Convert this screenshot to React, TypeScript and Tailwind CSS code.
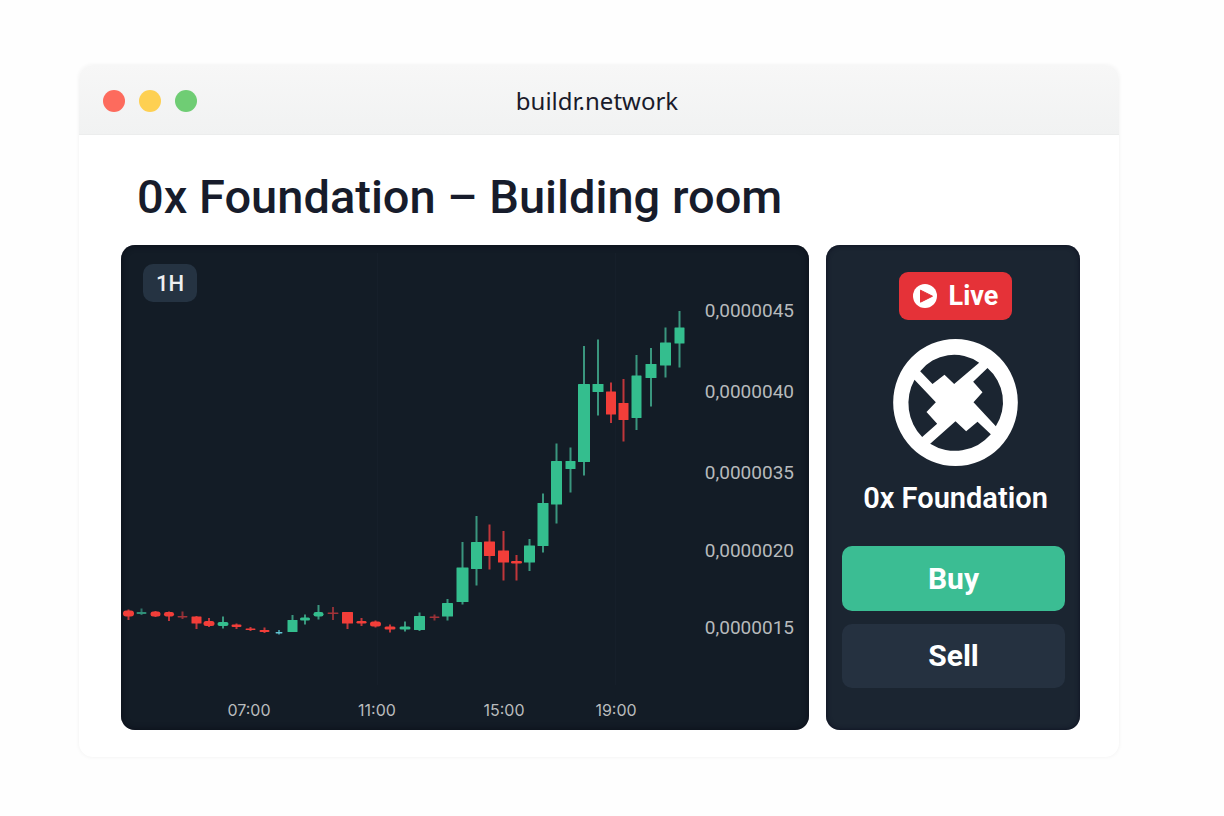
type Tone = 'up' | 'down' | 'upDim' | 'downDim' | 'flat';

interface Candle {
  x: number;
  high: number;
  low: number;
  top: number;
  bottom: number;
  width: number;
  tone: Tone;
}

const tones: Record<Tone, { body: string; wick: string }> = {
  up: { body: '#34be8e', wick: '#3a967e' },
  down: { body: '#f23e39', wick: '#bf363a' },
  upDim: { body: '#2f8f78', wick: '#2c6f66' },
  downDim: { body: '#a33238', wick: '#8d3036' },
  flat: { body: '#62c4d2', wick: '#3d8a96' },
};

const c = (
  x: number,
  high: number,
  low: number,
  top: number,
  bottom: number,
  width: number,
  tone: Tone,
): Candle => ({ x, high, low, top, bottom, width, tone });

const candles: Candle[] = [
  c(7.5, 364.5, 375, 365.5, 371.5, 11, 'down'),
  c(20.5, 363.5, 370, 367, 369, 10, 'upDim'),
  c(34.5, 366, 372, 366.5, 371.5, 10, 'down'),
  c(48, 366.5, 376, 367, 371.5, 10, 'down'),
  c(61.5, 366.5, 374, 371, 372.5, 10, 'downDim'),
  c(75.5, 371, 384, 371.5, 378.5, 10, 'down'),
  c(88, 373, 382, 376, 381, 11, 'down'),
  c(102, 371.5, 383.5, 377, 381, 11, 'up'),
  c(115.5, 378.5, 384, 379.5, 382, 10, 'down'),
  c(129.5, 382, 386, 383.5, 385, 10, 'down'),
  c(143.5, 382.5, 388, 385, 387, 10, 'down'),
  c(158, 385, 389.5, 387, 388.5, 7, 'flat'),
  c(171.5, 370, 387, 375, 387, 10, 'up'),
  c(184, 369.5, 379.5, 372.5, 375.5, 10, 'up'),
  c(197.5, 360, 374.5, 367, 371.5, 10, 'up'),
  c(212, 362, 375, 367.5, 369, 11, 'downDim'),
  c(226.5, 367, 384, 367, 378.5, 11, 'down'),
  c(240.5, 373, 381, 376, 378.5, 10, 'down'),
  c(254.5, 375.5, 382.5, 376.5, 381.5, 11, 'down'),
  c(269, 379.5, 387.5, 381.5, 384.5, 11, 'down'),
  c(284, 376.5, 386.5, 381.5, 384.5, 11, 'up'),
  c(298.5, 367.5, 386, 371, 385, 11, 'up'),
  c(313.5, 369.5, 375.5, 371.5, 373, 10, 'downDim'),
  c(326.5, 354, 375.5, 358, 371.5, 11, 'up'),
  c(341.5, 297, 359.5, 322.5, 357, 12, 'up'),
  c(355.5, 271, 340.5, 297, 324, 11, 'up'),
  c(368.5, 279.5, 324.5, 296.5, 311, 11, 'down'),
  c(382.5, 286, 335.5, 305.5, 317.5, 11, 'down'),
  c(395.5, 310, 335.5, 316, 318.5, 11, 'down'),
  c(408.5, 294, 326, 300.5, 317.5, 11, 'up'),
  c(422, 248.5, 307.5, 258, 301, 11, 'up'),
  c(435.5, 198.5, 278.5, 216, 259.5, 11, 'up'),
  c(449.5, 202.5, 247.5, 216, 224, 10, 'up'),
  c(463, 101, 230.5, 139, 217, 12, 'up'),
  c(477, 94.5, 170.5, 139, 147, 11, 'up'),
  c(490, 137.5, 178, 146.5, 169.5, 10, 'down'),
  c(502.5, 134, 196.5, 158, 175, 10, 'down'),
  c(515.5, 110, 185, 130.5, 173, 10, 'up'),
  c(530, 103, 161.5, 119, 133, 11, 'up'),
  c(544.5, 82.5, 132.5, 97.5, 120.5, 11, 'up'),
  c(558.5, 66, 122.5, 82.5, 98.5, 10, 'up'),
];

const prices = [
  { label: '0,0000045', y: 72 },
  { label: '0,0000040', y: 153 },
  { label: '0,0000035', y: 234 },
  { label: '0,0000020', y: 312 },
  { label: '0,0000015', y: 389 },
];

const times = [
  { label: '07:00', x: 128 },
  { label: '11:00', x: 256 },
  { label: '15:00', x: 383 },
  { label: '19:00', x: 495 },
];

function CandleMark({ candle }: { candle: Candle }) {
  const { x, high, low, top, bottom, width, tone } = candle;
  const colors = tones[tone];
  const height = bottom - top;
  return (
    <g>
      <rect x={x - 1} y={high} width={2} height={low - high} fill={colors.wick} />
      <rect
        x={x - width / 2}
        y={top}
        width={width}
        height={height}
        rx={height < 7 ? height / 2 : 0.5}
        fill={colors.body}
      />
    </g>
  );
}

function PriceChart() {
  return (
    <section
      aria-label="Price chart"
      className="relative min-w-0 flex-1 overflow-hidden rounded-[14px] bg-[#131c26] shadow-[inset_0_0_6px_#0a0d18]"
    >
      <svg viewBox="0 0 688 485" className="block h-auto w-full" role="img" aria-label="Candlestick chart">
        <path d="M256.5 8V440M494.5 8V440" stroke="#161f2a" strokeWidth="1" />
        {candles.map((candle) => (
          <CandleMark key={candle.x} candle={candle} />
        ))}
        <g className="font-['Roboto',sans-serif] text-[19px]" fill="#b7babc">
          {prices.map((price) => (
            <text key={price.label} x={673} y={price.y} textAnchor="end">
              {price.label}
            </text>
          ))}
        </g>
        <g className="font-['Inter',sans-serif] text-[16px]" fill="#b9bbbd">
          {times.map((time) => (
            <text key={time.label} x={time.x} y={471} textAnchor="middle">
              {time.label}
            </text>
          ))}
        </g>
      </svg>
      <button
        type="button"
        className="absolute top-[19px] left-[22px] h-[38px] w-[54px] rounded-[10px] bg-[#253342] pt-[2px] text-[22px] leading-none font-medium text-[#eef0f1]"
      >
        1H
      </button>
    </section>
  );
}

function ZrxLogo() {
  return (
    <svg viewBox="0 0 374 381" className="mt-[19px] h-[127px] w-[125px]" role="img" aria-label="0x logo">
      <path
        fill="#fff"
        fillRule="evenodd"
        d="M187 0A187 190.5 0 0 1 187 381A187 190.5 0 0 1 187 0Z
           M81 97L118 135L154 107L183 135L258 71A130 130 0 0 0 81 97Z
           M283 87L240 128L268 160L241 190L308 262A135 135 0 0 0 283 87Z
           M293 286L253 248L219 277L187 247L111 314A142 144 0 0 0 293 286Z
           M87 294L132 254L100 219L128 190L64 122A142 144 0 0 0 87 294Z"
      />
    </svg>
  );
}

function TradePanel() {
  return (
    <aside className="flex w-[254px] shrink-0 flex-col rounded-[14px] bg-[#1b2531] pt-[27px] pr-[15px] pl-4 text-white shadow-[inset_0_0_5px_#0d1020]">
      <div className="flex flex-col items-center pl-1">
        <div className="flex h-12 items-center gap-3 rounded-[9px] bg-[#e53238] px-[14px]">
          <svg viewBox="0 0 24 24" className="size-6" aria-hidden="true">
            <circle cx="12" cy="12" r="12" fill="#fff" />
            <path d="M7.5 6.2L19.5 12.2L7.5 18.2Z" fill="#e53238" stroke="#e53238" strokeLinejoin="round" />
          </svg>
          <span className="text-[27px] leading-none font-bold">Live</span>
        </div>
        <ZrxLogo />
        <h2 className="mt-[14px] text-[29px] leading-9 font-semibold whitespace-nowrap">0x Foundation</h2>
      </div>
      <button
        type="button"
        className="mt-[30px] h-[65px] w-full rounded-[10px] bg-[#3bbd93] text-[30px] leading-none font-bold"
      >
        Buy
      </button>
      <button
        type="button"
        className="mt-[13px] h-16 w-full rounded-[10px] bg-[#253140] text-[30px] leading-none font-bold"
      >
        Sell
      </button>
    </aside>
  );
}

export default function App() {
  return (
    <div className="min-h-screen bg-[#fefefe] pt-[65px] pr-[105px] pb-14 pl-[79px] font-['Roboto',sans-serif]">
      <main className="overflow-hidden rounded-[14px] bg-white pb-[27px] shadow-[0_0_4px_rgba(0,0,0,0.06)]">
        <header className="grid h-[70px] grid-cols-[1fr_auto_1fr] items-center border-b border-[#eceded] bg-linear-to-b from-[#f7f7f7] to-[#f1f2f2] pt-[2px] pr-7 pl-6">
          <div className="flex gap-[14px]">
            <span className="size-[22px] rounded-full bg-[#fd6b5d]" />
            <span className="size-[22px] rounded-full bg-[#fed052]" />
            <span className="size-[22px] rounded-full bg-[#6fcd74]" />
          </div>
          <span className="font-['Noto_Sans',sans-serif] text-[24px] leading-8 text-[#1a1b2b]">buildr.network</span>
          <span />
        </header>
        <div className="pr-[39px] pl-[42px]">
          <h1 className="pt-[34px] pl-4 text-[47px] leading-14 font-medium text-[#171c2b]">
            0x Foundation – Building room
          </h1>
          <div className="mt-5 flex gap-[17px]">
            <PriceChart />
            <TradePanel />
          </div>
        </div>
      </main>
    </div>
  );
}
